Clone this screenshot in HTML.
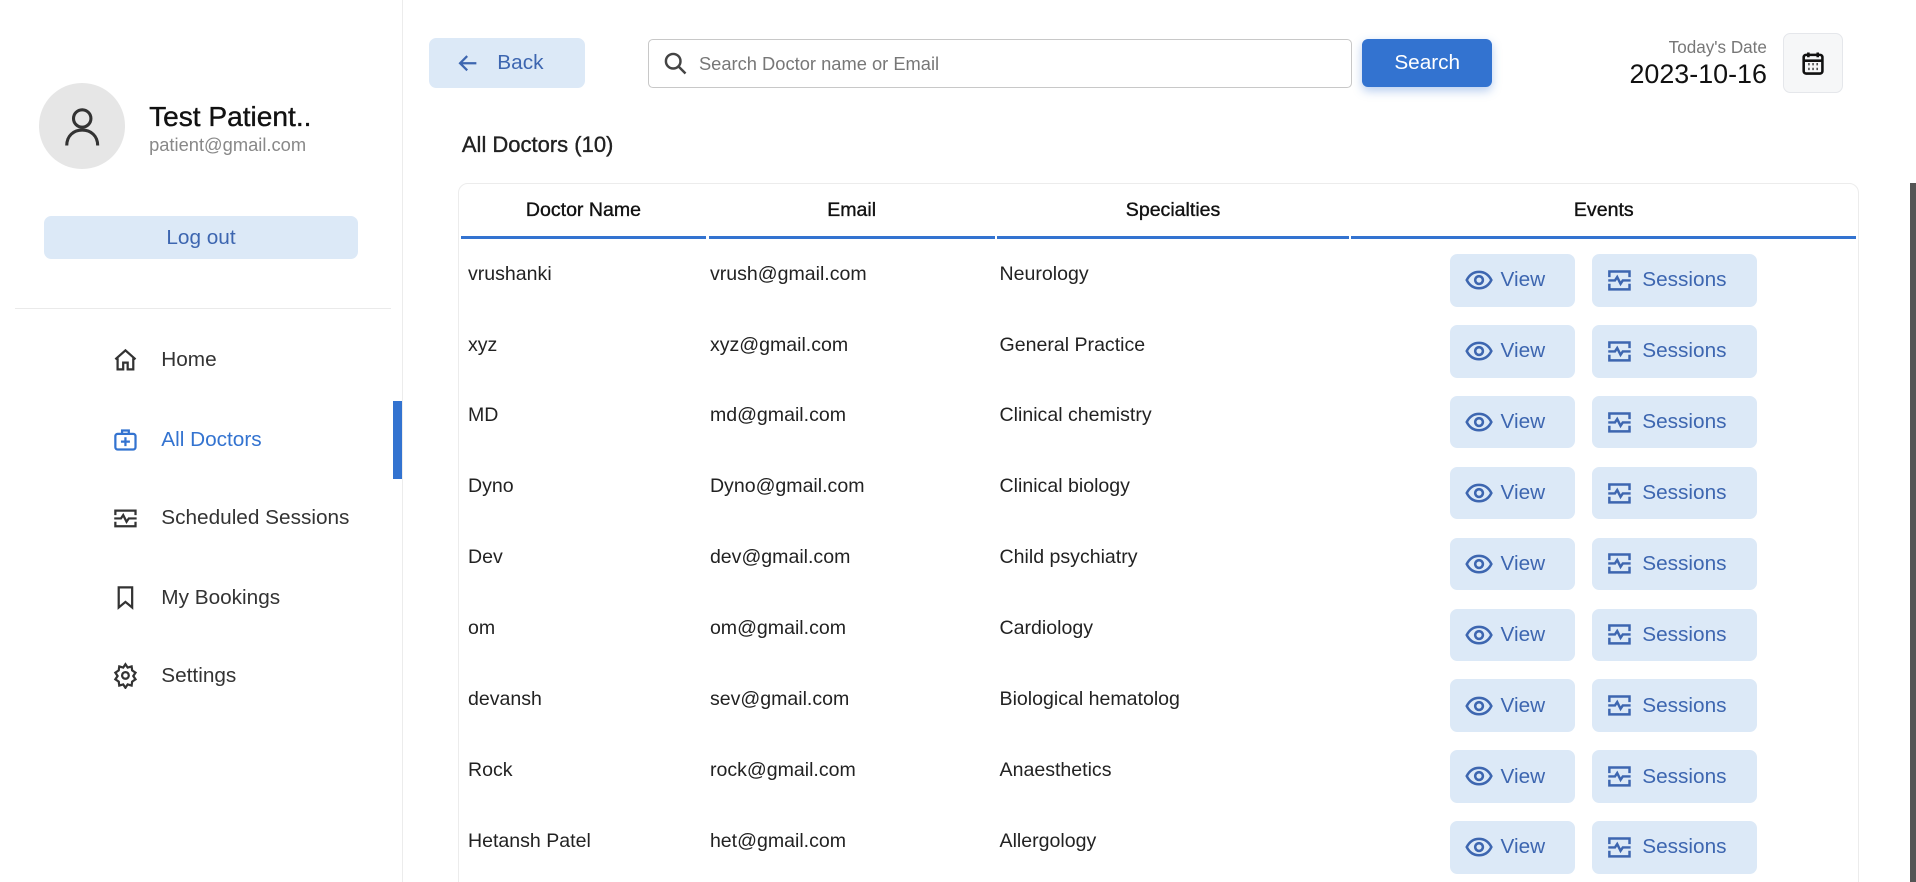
<!DOCTYPE html>
<html style="overflow:hidden"><head><meta charset="utf-8"><style>
html{zoom:1.22194}
body{margin:0;width:1568px;height:722px;overflow:hidden;background:#fff;font-family:"Liberation Sans",sans-serif;position:relative;color:#222}
.a{position:absolute}
.btn{position:absolute;background:#dce9f7;border-radius:6px;color:#3d66b0;font-size:17px;display:flex;align-items:center}
.nav{position:absolute;left:92px;font-size:17px;color:#333;display:flex;align-items:center;gap:18px}
.nav svg{width:22px;height:22px}
.hd{position:absolute;top:160px;font-size:16px;color:#111;text-align:center;height:33px;line-height:24px;border-bottom:3px solid #3373d0;-webkit-text-stroke:0.3px #111}
.cell{position:absolute;font-size:16px;color:#222}
</style></head><body>
<div class="a" style="left:329px;top:0;width:1px;height:722px;background:#ececec"></div>
<div class="a" style="left:32px;top:68px;width:70px;height:70px;border-radius:50%;background:#e6e6e6"></div>
<svg class="a" style="left:48px;top:84px" width="38" height="38" viewBox="0 0 24 24" fill="none" stroke="#333" stroke-width="1.6"><circle cx="12" cy="8" r="4.5"/><path d="M4 22c0-5 3.5-8 8-8s8 3 8 8"/></svg>
<div class="a" style="left:122px;top:83px;font-size:23px;color:#111;-webkit-text-stroke:0.3px #111">Test Patient..</div>
<div class="a" style="left:122px;top:110px;font-size:15px;color:#888">patient@gmail.com</div>
<div class="btn" style="left:36px;top:177px;width:257px;height:35px;justify-content:center">Log out</div>
<div class="a" style="left:12px;top:252px;width:308px;height:1px;background:#eaeaea"></div>
<div class="nav" style="top:284px"><svg viewBox="0 0 24 24" fill="none" stroke="#333" stroke-width="2"><path d="M3 11l9-8 9 8M5 10v10h5v-6h4v6h5V10"/></svg>Home</div>
<div class="nav" style="top:349px;color:#3373d0"><svg viewBox="0 0 24 24" fill="none" stroke="#3373d0" stroke-width="2"><rect x="3" y="7" width="18" height="14" rx="2"/><path d="M9 7V4h6v3M12 10v8M8 14h8"/></svg>All Doctors</div>
<div class="a" style="left:322px;top:328px;width:7px;height:64px;background:#3373d0"></div>
<div class="nav" style="top:413px"><svg viewBox="0 0 24 24" fill="none" stroke="#333" stroke-width="2"><path d="M3 9V5h18v4M3 15v4h18v-4M2 12h6l2-3 3 6 2-3h7"/></svg>Scheduled Sessions</div>
<div class="nav" style="top:478px"><svg viewBox="0 0 24 24" fill="none" stroke="#333" stroke-width="2"><path d="M6 3h12v18l-6-5-6 5z"/></svg>My Bookings</div>
<div class="nav" style="top:542px"><svg viewBox="0 0 24 24" fill="none" stroke="#333" stroke-width="2"><circle cx="12" cy="12" r="3"/><path d="M12 2l2 3 3.5-1 .5 3.5 3 2-2 3 2 3-3 2-.5 3.5-3.5-1-2 3-2-3-3.5 1L6 17.5l-3-2 2-3-2-3 3-2L6.5 4l3.5 1z"/></svg>Settings</div>

<div class="btn" style="left:351px;top:31px;width:128px;height:41px"><svg style="margin-left:22px" width="20" height="20" viewBox="0 0 24 24" fill="none" stroke="#3d66b0" stroke-width="2.2"><path d="M20 12H4M11 5l-7 7 7 7"/></svg><span style="margin-left:14px">Back</span></div>
<div class="a" style="left:530px;top:32px;width:575px;height:38px;border:1px solid #c8c8c8;border-radius:4px"></div>
<svg class="a" style="left:542px;top:41px" width="22" height="22" viewBox="0 0 24 24" fill="none" stroke="#444" stroke-width="2.2"><circle cx="10" cy="10" r="6.5"/><path d="M15 15l6 6"/></svg>
<div class="a" style="left:572px;top:43px;font-size:15px;color:#777">Search Doctor name or Email</div>
<div class="a" style="left:1115px;top:32px;width:106px;height:39px;background:#3373d0;border-radius:5px;color:#fff;font-size:17px;text-align:center;line-height:39px;box-shadow:0 3px 8px rgba(51,115,208,.35)">Search</div>
<div class="a" style="right:122px;top:31px;font-size:14px;color:#777">Today's Date</div>
<div class="a" style="right:122px;top:48px;font-size:22px;color:#111">2023-10-16</div>
<div class="a" style="left:1459px;top:27px;width:49px;height:49px;background:#f6f7f8;border:1px solid #e5e7eb;border-radius:6px;box-sizing:border-box"></div>
<svg class="a" style="left:1472px;top:40px" width="23" height="23" viewBox="0 0 24 24" fill="none" stroke="#111" stroke-width="2.2"><rect x="4" y="5" width="16" height="16" rx="2"/><path d="M8 3v4M16 3v4M4 10h16"/><path d="M8 13h1M11.5 13h1M15 13h1M8 17h1M11.5 17h1M15 17h1" stroke-width="2"/></svg>

<div class="a" style="left:378px;top:108px;font-size:18px;color:#222;-webkit-text-stroke:0.3px #222">All Doctors (10)</div>
<div class="a" style="left:375px;top:150px;width:1146px;height:600px;border:1px solid #ececec;border-radius:8px;box-sizing:border-box"></div>
<div class="hd" style="left:377px;width:201px">Doctor Name</div>
<div class="hd" style="left:580px;width:234px">Email</div>
<div class="hd" style="left:816px;width:288px">Specialties</div>
<div class="hd" style="left:1106px;width:413px">Events</div>
<div class="a" style="left:1563px;top:150px;width:5px;height:572px;background:#555"></div>
<div id="rows"></div>
<script>
var d=[["vrushanki","vrush@gmail.com","Neurology"],["xyz","xyz@gmail.com","General Practice"],["MD","md@gmail.com","Clinical chemistry"],["Dyno","Dyno@gmail.com","Clinical biology"],["Dev","dev@gmail.com","Child psychiatry"],["om","om@gmail.com","Cardiology"],["devansh","sev@gmail.com","Biological hematolog"],["Rock","rock@gmail.com","Anaesthetics"],["Hetansh Patel","het@gmail.com","Allergology"]];
var h="";
d.forEach(function(r,i){var y=208+i*58;
h+='<div class="cell" style="left:383px;top:'+(y+7)+'px">'+r[0]+'</div><div class="cell" style="left:581px;top:'+(y+7)+'px">'+r[1]+'</div><div class="cell" style="left:818px;top:'+(y+7)+'px">'+r[2]+'</div>';
h+='<div class="btn" style="left:1187px;top:'+y+'px;width:102px;height:43px"><svg style="margin-left:12px" width="23" height="23" viewBox="0 0 24 24" fill="none" stroke="#3d66b0" stroke-width="2.2"><path d="M1.5 12C4 7 8 5 12 5s8 2 10.5 7C20 17 16 19 12 19S4 17 1.5 12z"/><circle cx="12" cy="12" r="3.3"/></svg><span style="margin-left:6px">View</span></div>';
h+='<div class="btn" style="left:1303px;top:'+y+'px;width:135px;height:43px"><svg style="margin-left:11px" width="22" height="22" viewBox="0 0 24 24" fill="none" stroke="#3d66b0" stroke-width="2.2"><path d="M3 9V4h18v5M3 15v5h18v-5M2 12h6l2-3 3 6 2-3h7"/></svg><span style="margin-left:8px">Sessions</span></div>';});
document.getElementById("rows").innerHTML=h;
</script>
</body></html>
